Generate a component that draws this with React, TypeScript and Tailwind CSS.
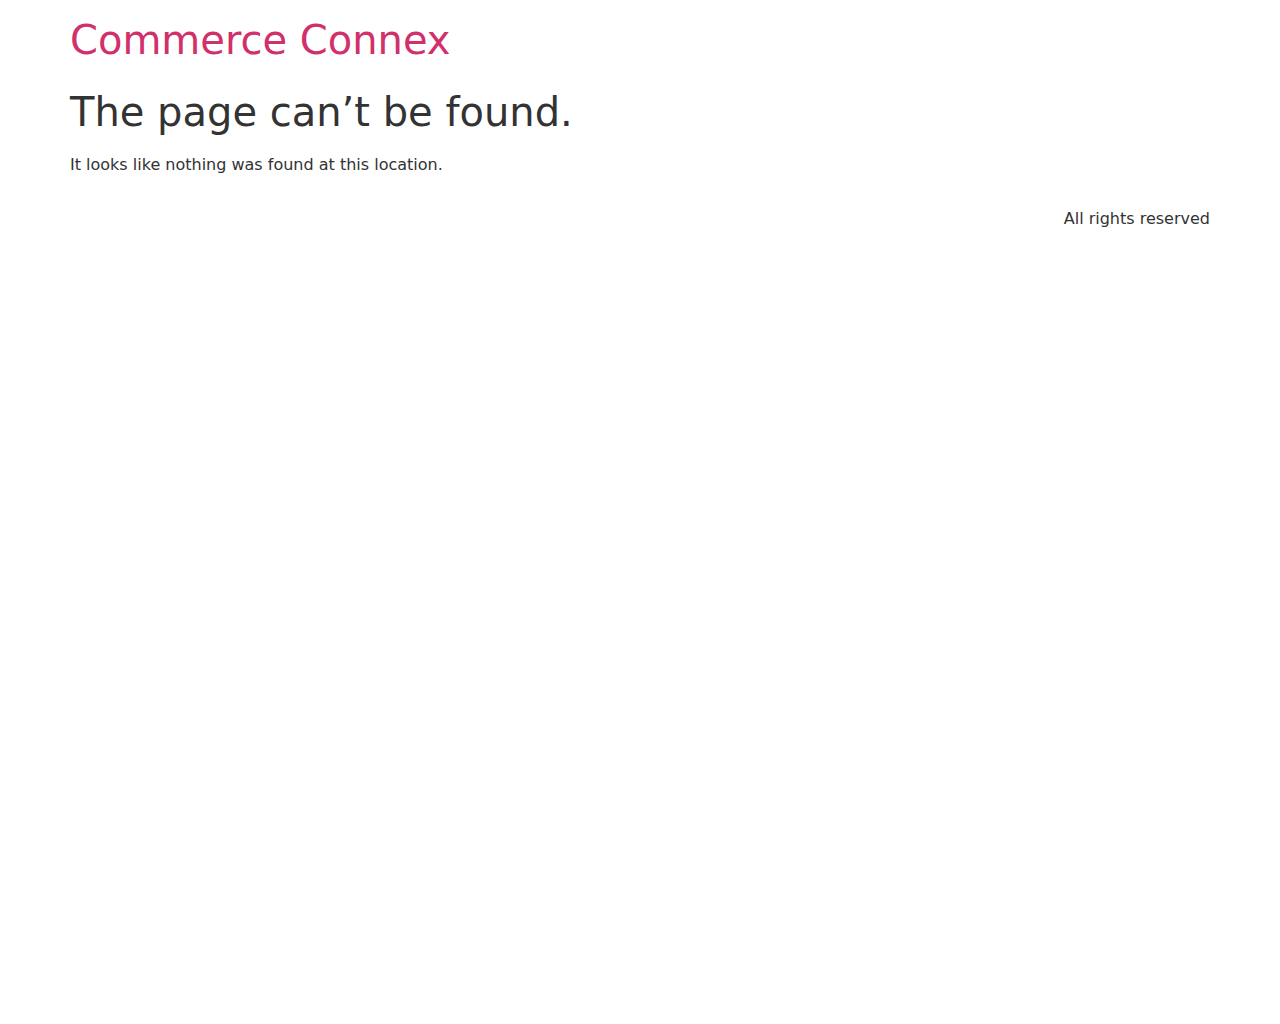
import React from 'react';

export default function App() {
  return (
    <div className="min-h-screen bg-white text-[#333333]" style={{ fontFamily: '"DejaVu Sans", sans-serif' }}>
      <div className="px-[70px]">
        {/* Header */}
        <header className="pt-[14px]">
          <a href="#" className="text-[40px] leading-[52px] text-[#d1306a]">Commerce Connex</a>
        </header>

        {/* Content */}
        <main className="mt-[20px]">
          <h1 className="text-[40px] leading-[52px]">The page can’t be found.</h1>
          <p className="mt-[15px] text-[16px] leading-[24px]">It looks like nothing was found at this location.</p>
        </main>

        {/* Footer */}
        <footer className="mt-[30px] text-right text-[16px] leading-[24px]">All rights reserved</footer>
      </div>
    </div>
  );
}
